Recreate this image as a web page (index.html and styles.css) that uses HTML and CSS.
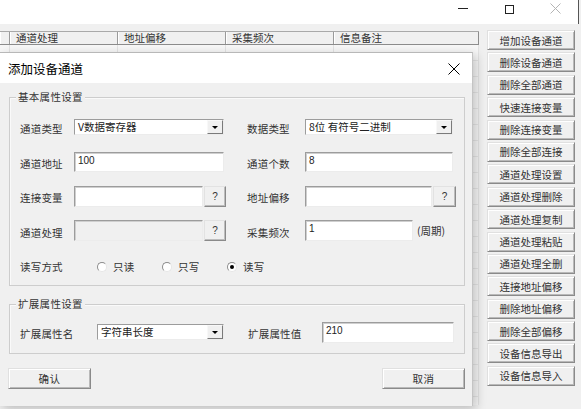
FILE: index.html
```html
<!DOCTYPE html>
<html lang="zh-CN">
<head>
<meta charset="utf-8">
<title>添加设备通道</title>
<link rel="stylesheet" href="styles.css">
</head>
<body>
<div class="win">
  <div class="titlebar">
    <div class="cap"><span class="min-line"></span></div>
    <div class="cap"><span class="max-box"></span></div>
    <div class="cap">
      <svg class="close-x" width="11" height="11" viewBox="0 0 11 11"><path d="M0.5 0.5L10.5 10.5M10.5 0.5L0.5 10.5" stroke="#b4b4b4" stroke-width="1" fill="none"/></svg>
    </div>
  </div>
  <div class="main">
    <div class="table">
      <div class="thead">
        <div class="th stub"></div>
        <div class="th c1">通道处理</div>
        <div class="th c2">地址偏移</div>
        <div class="th c3">采集频次</div>
        <div class="th c4">信息备注</div>
      </div>
      <div class="tbody">
        <div class="td stub"></div><div class="td c1"></div><div class="td c2"></div><div class="td c3"></div><div class="td c4"></div>
      </div>
    </div>
    <div class="btncol">
      <div class="btn">增加设备通道</div>
      <div class="btn">删除设备通道</div>
      <div class="btn">删除全部通道</div>
      <div class="btn">快速连接变量</div>
      <div class="btn">删除连接变量</div>
      <div class="btn">删除全部连接</div>
      <div class="btn">通道处理设置</div>
      <div class="btn">通道处理删除</div>
      <div class="btn">通道处理复制</div>
      <div class="btn">通道处理粘贴</div>
      <div class="btn">通道处理全删</div>
      <div class="btn">连接地址偏移</div>
      <div class="btn">删除地址偏移</div>
      <div class="btn">删除全部偏移</div>
      <div class="btn">设备信息导出</div>
      <div class="btn">设备信息导入</div>
    </div>
  </div>

  <div class="dialog">
    <div class="dlg-title">
      <span class="dlg-caption">添加设备通道</span>
      <svg class="dlg-close" width="12" height="12" viewBox="0 0 12 12"><path d="M0.5 0.5L11.5 11.5M11.5 0.5L0.5 11.5" stroke="#000" stroke-width="1" fill="none"/></svg>
    </div>
    <div class="dlg-body">
      <div class="group g1">
        <span class="legend">基本属性设置</span>
        <div class="row">
          <span class="lab l1">通道类型</span>
          <div class="ctl">
            <div class="combo w150"><span class="ctext">V数据寄存器</span><span class="drop"><i class="tri"></i></span></div>
          </div>
          <span class="lab l2">数据类型</span>
          <div class="ctl">
            <div class="combo w148"><span class="ctext">8位 有符号二进制</span><span class="drop"><i class="tri"></i></span></div>
          </div>
        </div>
        <div class="row">
          <span class="lab l1">通道地址</span>
          <div class="ctl"><div class="edit h20 w150">100</div></div>
          <span class="lab l2">通道个数</span>
          <div class="ctl"><div class="edit h20 w148">8</div></div>
        </div>
        <div class="row">
          <span class="lab l1">连接变量</span>
          <div class="ctl"><div class="edit h21 w129"></div><div class="qbtn w22">?</div></div>
          <span class="lab l2">地址偏移</span>
          <div class="ctl"><div class="edit h21 w127"></div><div class="qbtn w23">?</div></div>
        </div>
        <div class="row">
          <span class="lab l1">通道处理</span>
          <div class="ctl"><div class="edit h21 w129 disabled"></div><div class="qbtn w22">?</div></div>
          <span class="lab l2">采集频次</span>
          <div class="ctl"><div class="edit h21 w108">1</div><span class="unit">(周期)</span></div>
        </div>
        <div class="row">
          <span class="lab l1">读写方式</span>
          <div class="radios">
            <label class="radio"><span class="dot"></span>只读</label>
            <label class="radio"><span class="dot"></span>只写</label>
            <label class="radio"><span class="dot on"></span>读写</label>
          </div>
        </div>
      </div>

      <div class="group g2">
        <span class="legend">扩展属性设置</span>
        <div class="row">
          <span class="lab l3">扩展属性名</span>
          <div class="combo w127"><span class="ctext">字符串长度</span><span class="drop"><i class="tri"></i></span></div>
          <span class="lab l4">扩展属性值</span>
          <div class="edit h21 w132">210</div>
        </div>
      </div>

      <div class="dlg-btns">
        <div class="btn dbtn">确认</div>
        <div class="btn dbtn">取消</div>
      </div>
    </div>
  </div>
</div>
</body>
</html>
```

FILE: styles.css
```css
* { box-sizing: border-box; }
html, body {
  margin: 0;
  padding: 0;
  width: 581px;
  height: 409px;
  overflow: hidden;
  background: #f0f0f0;
  font-family: "Noto Sans CJK SC", "Noto Sans", sans-serif;
  font-size: 10.5px;
  color: #333;
}
.win {
  position: relative;
  width: 581px;
  height: 409px;
}

/* main window caption */
.titlebar {
  height: 24px;
  width: 579px;
  background: #fff;
  border-right: 1px solid #555;
  display: flex;
  justify-content: flex-end;
}
.cap {
  width: 46px;
  height: 18px;
  display: flex;
  align-items: center;
  justify-content: center;
  padding-top: 1px;
}
.min-line {
  display: block;
  width: 10px;
  height: 1px;
  background: #222;
  margin-top: -2px;
}
.max-box {
  display: block;
  width: 9px;
  height: 9px;
  border: 1px solid #222;
}
.close-x { display: block; margin-top: -2px; }

/* main client area */
.main {
  display: flex;
  align-items: flex-start;
}
.table {
  width: 479px;
  margin-top: 7px;
}
.thead {
  display: flex;
  height: 14px;
  border-top: 1px solid #a9a9a9;
  border-bottom: 1px solid #8c8c8c;
  background: #f0f0f0;
}
.th {
  height: 12px;
  line-height: 12px;
  padding-left: 6px;
  border-right: 1px solid #9a9a9a;
  box-shadow: inset 1px 0 #fff;
  white-space: nowrap;
}
.stub { width: 10px; flex: 0 0 10px; }
.c1 { width: 108px; flex: 0 0 108px; }
.c2 { width: 108px; flex: 0 0 108px; }
.c3 { width: 108px; flex: 0 0 108px; }
.c4 { width: 145px; flex: 0 0 145px; border-right: 1px solid #8c8c8c; }
.tbody {
  display: flex;
  height: 360px;
  background: repeating-linear-gradient(to bottom, #f7f7f7 0, #f7f7f7 15px, #e6e6e6 15px, #e6e6e6 16px);
}
.td {
  height: 100%;
  border-right: 1px solid #e3e3e3;
}

.btncol {
  margin-left: 8px;
  margin-top: 6px;
  width: 88px;
  display: flex;
  flex-direction: column;
  gap: 2.4px;
}
.btn {
  height: 20px;
  display: flex;
  align-items: center;
  justify-content: center;
  background: #f0f0f0;
  border-top: 1px solid #e0e0e0;
  border-left: 1px solid #e0e0e0;
  border-right: 1px solid #8a8a8a;
  border-bottom: 1px solid #8a8a8a;
  box-shadow: inset 1px 1px #fff, inset -1px -1px #b9b9b9;
  white-space: nowrap;
}

/* dialog window */
.dialog {
  position: absolute;
  left: 0;
  top: 52px;
  width: 473px;
  height: 354px;
  background: #f0f0f0;
  border-top: 1px solid #b8b8b8;
  border-right: 1px solid #c4c4c4;
  box-shadow: 3px 3px 10px rgba(0, 0, 0, 0.22);
}
.dlg-title {
  height: 30px;
  background: #fff;
  display: flex;
  align-items: center;
  justify-content: space-between;
  padding-left: 8px;
  padding-right: 12px;
}
.dlg-caption {
  font-size: 12.5px;
  color: #000;
}
.dlg-close { display: block; margin-top: 1px; }

.dlg-body {
  padding: 14px 7px 0 9px;
}
.group {
  position: relative;
  width: 456px;
  border: 1px solid #cdcdcd;
  box-shadow: inset 1px 1px #fafafa;
  padding-left: 10px;
}
.g1 {
  height: 189px;
  padding-top: 12px;
}
.g2 {
  height: 50px;
  margin-top: 18px;
  padding-top: 10px;
}
.legend {
  position: absolute;
  left: 6px;
  top: -8px;
  padding: 0 2px;
  background: #f0f0f0;
  line-height: 14px;
  letter-spacing: 0.3px;
}
.row {
  display: flex;
  align-items: center;
  height: 34.5px;
}
.lab {
  flex: 0 0 auto;
  white-space: nowrap;
  letter-spacing: 0.2px;
  padding-top: 3px;
}
.l1 { width: 54px; }
.l2 { width: 58px; margin-left: 23px; }
.l3 { width: 77px; }
.l4 { width: 74px; margin-left: 24px; }
.ctl {
  flex: 0 0 150px;
  width: 150px;
  display: flex;
  align-items: center;
}

.edit {
  flex: 0 0 auto;
  background: #fff;
  border-top: 1px solid #9c9c9c;
  border-left: 1px solid #9c9c9c;
  border-right: 1px solid #ececec;
  border-bottom: 1px solid #ececec;
  box-shadow: inset 1px 1px #cfcfcf;
  padding: 2px 0 0 3px;
  line-height: 11px;
  font-size: 10px;
  color: #222;
  font-family: "Liberation Sans", "Noto Sans CJK SC", sans-serif;
}
.edit.disabled { background: #f0f0f0; }
.h20 { height: 20px; }
.h21 { height: 21px; }
.w150 { width: 150px; }
.w148 { width: 148px; }
.w129 { width: 129px; }
.w127 { width: 127px; }
.w132 { width: 132px; }
.w108 { width: 108px; }
.w22 { width: 22px; }
.w23 { width: 23px; }

.combo {
  flex: 0 0 auto;
  height: 16px;
  display: flex;
  align-items: stretch;
  background: #fff;
  border-top: 1px solid #9c9c9c;
  border-left: 1px solid #9c9c9c;
  border-right: 1px solid #ececec;
  border-bottom: 1px solid #ececec;
}
.ctext {
  flex: 1;
  padding-left: 3px;
  line-height: 13px;
  white-space: nowrap;
  overflow: hidden;
  color: #222;
}
.drop {
  flex: 0 0 16px;
  display: flex;
  align-items: center;
  justify-content: center;
  background: #f0f0f0;
  border-top: 1px solid #f8f8f8;
  border-left: 1px solid #f8f8f8;
  border-right: 1px solid #7a7a7a;
  border-bottom: 1px solid #7a7a7a;
}
.tri {
  display: block;
  width: 0;
  height: 0;
  border-left: 3px solid transparent;
  border-right: 3px solid transparent;
  border-top: 3px solid #000;
}

.qbtn {
  flex: 0 0 auto;
  height: 21px;
  margin-left: 1px;
  display: flex;
  align-items: center;
  justify-content: center;
  background: #f0f0f0;
  border-top: 1px solid #e2e2e2;
  border-left: 1px solid #e2e2e2;
  border-right: 1px solid #8a8a8a;
  border-bottom: 1px solid #8a8a8a;
  box-shadow: inset -1px -1px #bdbdbd;
  font-family: "Liberation Sans", sans-serif;
  font-size: 10px;
}
.unit {
  margin-left: 4px;
  white-space: nowrap;
}

.radios {
  display: flex;
  padding-left: 23px;
  padding-top: 3px;
}
.radio {
  width: 65px;
  display: flex;
  align-items: center;
  gap: 6px;
  letter-spacing: 0.2px;
}
.dot {
  width: 10px;
  height: 10px;
  border-radius: 50%;
  background: #fff;
  border: 1px solid;
  border-color: #8c8c8c #e6e6e6 #e6e6e6 #8c8c8c;
  display: flex;
  align-items: center;
  justify-content: center;
}
.dot.on::after {
  content: "";
  width: 4px;
  height: 4px;
  border-radius: 50%;
  background: #000;
}

.dlg-btns {
  display: flex;
  justify-content: space-between;
  margin-top: 14px;
  margin-left: -1px;
}
.dbtn {
  width: 83px;
  height: 21px;
  letter-spacing: 0.5px;
}
```
